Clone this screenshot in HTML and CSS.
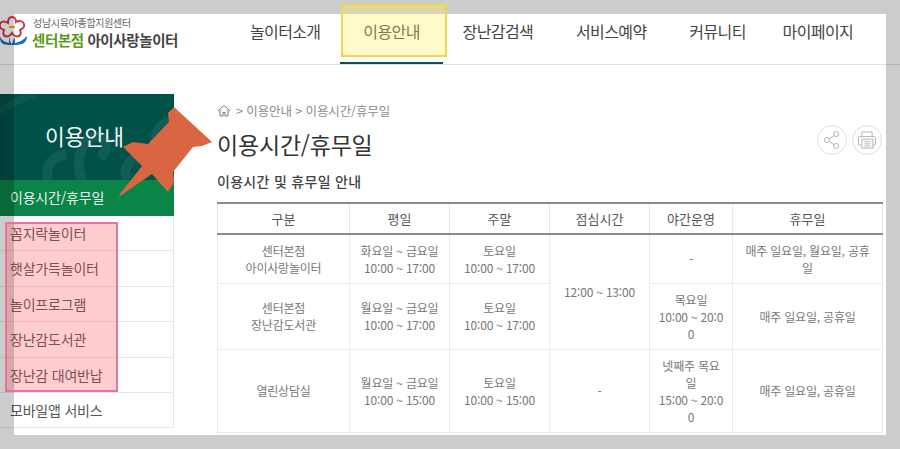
FILE: index.html
```html
<!DOCTYPE html>
<html lang="ko">

<head>
    <meta charset="UTF-8" />
    <title>이용시간/휴무일</title>
    <meta name="viewport" content="width=device-width, initial-scale=1.0" />
    <link rel="stylesheet" href="styles.css">
</head>

<body>

    <!-- header -->
    <header class="header">
        <div class="logo">
            <svg class="logo-mark" width="28" height="30" viewBox="0 0 28 30">
                <path d="M12 1c3 0 4 3 4 5 3-2 7-1 8 2s-2 5-4 6c1 2 1 5-1 6-2 1-5 0-7-3-2 3-5 4-7 3-2-1-2-4-1-6-3-1-5-3-4-6s5-3 8-1c0-3 1-6 4-6z" fill="#fff" stroke="#d8344e" stroke-width="2" />
                <rect x="9" y="10" width="6" height="2" fill="#e0b020" />
                <path d="M0 20c1 4 5 6 9 7V21c1 2 1 6 3 7 1-2 1-5 3-7v6c5-1 8-3 12-7 0 4-2 7-5 8-3 1-7 1-10 1-5 0-9 0-11-3-1-2-1-4-1-5z" fill="#1c6fb8" />
            </svg>
            <div class="logo-text">
                <div class="logo-sub">성남시육아종합지원센터</div>
                <div class="logo-name"><span class="logo-green">센터본점</span> 아이사랑놀이터</div>
            </div>
        </div>
        <nav class="gnb">
            <a href="#">놀이터소개</a>
            <a href="#" class="on">이용안내</a>
            <a href="#">장난감검색</a>
            <a href="#">서비스예약</a>
            <a href="#">커뮤니티</a>
            <a href="#" class="last">마이페이지</a>
        </nav>
    </header>

    <div class="wrap">
        <!-- side menu -->
        <aside class="side">
            <div class="side-title">
                <svg class="side-swirl" width="173" height="86" viewBox="0 0 173 86">
                    <path d="M48 86c-4-16 6-24 18-26M82 86c-8-20 0-44 16-44 10 0 10 14 2 22M128 86c-6-10 0-20 10-22M160 60c-8-14-6-28 12-34" fill="none" stroke="#0f5d56" stroke-width="10" />
                    <path d="M0 18C12 8 24 4 34 0" fill="none" stroke="#0a5950" stroke-width="8" />
                </svg>
                <span>이용안내</span>
            </div>
            <a href="#" class="side-item on">이용시간/휴무일</a>
            <a href="#" class="side-item">꼼지락놀이터</a>
            <a href="#" class="side-item">햇살가득놀이터</a>
            <a href="#" class="side-item">놀이프로그램</a>
            <a href="#" class="side-item">장난감도서관</a>
            <a href="#" class="side-item">장난감 대여반납</a>
            <a href="#" class="side-item">모바일앱 서비스</a>
        </aside>

        <!-- content -->
        <main class="content">
            <div class="path">
                <svg width="14" height="13" viewBox="0 0 14 13">
                    <path d="M1 7l6-5.500 6 5.500M3 6v6h3V8.500h2V12h3V6" fill="none" stroke="#777" stroke-width="1" />
                </svg>
                <span>&gt; 이용안내 &gt; 이용시간/휴무일</span>
            </div>
            <div class="title-row">
                <h1>이용시간/휴무일</h1>
                <div class="tools">
                    <span class="tool">
                        <svg width="20" height="22" viewBox="0 0 20 22">
                            <path d="M6 10l8-5M6 12.500l8 5" stroke="#aaa" fill="none" />
                            <circle cx="4" cy="11" r="3" fill="#fff" stroke="#aaa" />
                            <circle cx="15" cy="4" r="3" fill="#fff" stroke="#aaa" />
                            <circle cx="15" cy="18" r="3" fill="#fff" stroke="#aaa" />
                        </svg>
                    </span>
                    <span class="tool">
                        <svg width="22" height="22" viewBox="0 0 22 22">
                            <path d="M5 7V1.500h12V7M5 17H2.500A1.500 1.500 0 0 1 1 15.500V8.500A1.500 1.500 0 0 1 2.500 7h17A1.500 1.500 0 0 1 21 8.500v7a1.500 1.500 0 0 1-1.500 1.500H18" fill="none" stroke="#aaa" />
                            <rect x="5" y="10" width="13" height="10.500" fill="#fff" stroke="#aaa" />
                            <path d="M8 13h7M8 15.500h7M8 18h7" stroke="#aaa" />
                        </svg>
                    </span>
                </div>
            </div>
            <h2>이용시간 및 휴무일 안내</h2>
            <table class="time-table">
                <colgroup>
                    <col class="c1">
                    <col class="c2">
                    <col class="c2">
                    <col class="c2">
                    <col class="c3">
                    <col>
                </colgroup>
                <thead>
                    <tr>
                        <th>구분</th>
                        <th>평일</th>
                        <th>주말</th>
                        <th>점심시간</th>
                        <th>야간운영</th>
                        <th>휴무일</th>
                    </tr>
                </thead>
                <tbody>
                    <tr class="r1">
                        <td>센터본점<br>아이사랑놀이터</td>
                        <td>화요일 ~ 금요일<br>10:00 ~ 17:00</td>
                        <td>토요일<br>10:00 ~ 17:00</td>
                        <td rowspan="2">12:00 ~ 13:00</td>
                        <td>-</td>
                        <td>매주 일요일, 월요일, 공휴<br>일</td>
                    </tr>
                    <tr class="r2">
                        <td>센터본점<br>장난감도서관</td>
                        <td>월요일 ~ 금요일<br>10:00 ~ 17:00</td>
                        <td>토요일<br>10:00 ~ 17:00</td>
                        <td>목요일<br>10:00 ~ 20:0<br>0</td>
                        <td>매주 일요일, 공휴일</td>
                    </tr>
                    <tr class="r3">
                        <td>열린상담실</td>
                        <td>월요일 ~ 금요일<br>10:00 ~ 15:00</td>
                        <td>토요일<br>10:00 ~ 15:00</td>
                        <td>-</td>
                        <td>넷째주 목요<br>일<br>15:00 ~ 20:0<br>0</td>
                        <td>매주 일요일, 공휴일</td>
                    </tr>
                </tbody>
            </table>
        </main>
    </div>

    <!-- annotations drawn on top of the capture -->
    <div class="note-frame"></div>
    <div class="note-yellow"></div>
    <div class="note-pink"></div>
    <svg class="note-pin" width="100" height="95" viewBox="0 0 100 95">
        <path d="M56 2 L50 8 L51 17 L30 39 L15 37 L5 42 L24 61 L1 90 L2 91 L34 69 L50 87 L56 77 L55 67 L75 42 L84 41 L94 37 Z" fill="#d96542" />
    </svg>

</body>

</html>
```

FILE: styles.css
```css
* {
    box-sizing: border-box;
}

body {
    margin: 0;
    position: relative;
    height: 449px;
    overflow: hidden;
    background: #fff;
    color: #555;
    font-family: "Noto Sans CJK KR", "Noto Sans", sans-serif;
    font-size: 12px;
}

a {
    color: inherit;
    text-decoration: none;
}

.header {
    display: flex;
    height: 65px;
    border-bottom: 1px solid #e2e2e2;
}

.logo {
    display: flex;
    width: 228.500px;
    padding-top: 16px;
}

.logo-mark {
    flex: none;
    margin-right: 4px;
}

.logo-text {
    margin-top: 0;
}

.logo-sub {
    height: 13px;
    margin-left: 1px;
    font-size: 10px;
    line-height: 13px;
    letter-spacing: -0.3px;
    color: #666;
}

.logo-name {
    margin-top: 2px;
    height: 17px;
    font-size: 14.500px;
    line-height: 17px;
    font-weight: 700;
    letter-spacing: -0.4px;
    color: #444;
    white-space: nowrap;
}

.logo-green {
    color: #5a9a20;
}

.gnb {
    display: flex;
}

.gnb a {
    position: relative;
    padding: 19px 21.400px 0;
    font-size: 16px;
    line-height: 24px;
    letter-spacing: -0.6px;
    color: #444;
    white-space: nowrap;
}

.gnb a.last {
    margin-left: -6px;
}

.gnb a.on::after {
    content: '';
    position: absolute;
    left: -2px;
    right: -2px;
    bottom: 0;
    height: 2px;
    background: #0d4f4f;
}

.wrap {
    display: flex;
    padding-top: 29px;
}

.side {
    width: 174px;
    flex: none;
}

.side-title {
    position: relative;
    height: 86px;
    padding: 27px 5px 0 0;
    background: #00514a;
    color: #f2f7f5;
    font-size: 21.500px;
    line-height: 30px;
    text-align: center;
    overflow: hidden;
}

.side-title span {
    position: relative;
}

.side-swirl {
    position: absolute;
    left: 0;
    top: 0;
}

.side-item {
    display: block;
    height: 35.400px;
    padding: 7px 0 0 10px;
    border-right: 1px solid #e6e6e6;
    border-bottom: 1px solid #e6e6e6;
    font-size: 14px;
    line-height: 20px;
    letter-spacing: -0.2px;
    color: #555;
}

.side-item.on {
    height: 36px;
    padding-top: 7px;
    background: #0a8447;
    border: none;
    color: #e6f2ea;
}

.content {
    flex: 1;
    margin-left: 43px;
    margin-right: 17px;
    padding-top: 6px;
}

.path {
    display: flex;
    align-items: center;
    gap: 5px;
    height: 20px;
    color: #8c8c8c;
    font-size: 12.500px;
    letter-spacing: -0.1px;
}

.title-row {
    display: flex;
    justify-content: space-between;
    height: 34px;
    margin-top: 7px;
}

h1 {
    margin: 0;
    font-size: 23px;
    line-height: 34px;
    font-weight: 400;
    letter-spacing: -0.2px;
    color: #333;
}

.tools {
    display: flex;
    gap: 5px;
    margin: -2px 1px 0 0;
}

.tool {
    display: flex;
    align-items: center;
    justify-content: center;
    width: 30px;
    height: 30px;
    border: 1px solid #ddd;
    border-radius: 50%;
}

.tool svg {
    transform: scale(.85);
}

h2 {
    margin: 10px 0 0;
    font-size: 14px;
    line-height: 20px;
    font-weight: 500;
    letter-spacing: 0.3px;
    color: #444;
}

.time-table {
    width: 100%;
    margin-top: 11px;
    table-layout: fixed;
    border-collapse: collapse;
    border: 1px solid #e8e8e8;
    border-top: 2px solid #8b8b8b;
    text-align: center;
}

.c1 {
    width: 132px;
}

.c2 {
    width: 100px;
}

.c3 {
    width: 83px;
}

th {
    height: 31px;
    padding: 0;
    border: 1px solid #e8e8e8;
    border-top: 0;
    border-bottom: 2px solid #8b8b8b;
    font-size: 13px;
    font-weight: 400;
    color: #555;
}

td {
    padding: 0;
    border: 1px solid #ebebeb;
    font-size: 12px;
    line-height: 17px;
    letter-spacing: -0.2px;
    color: #777;
    white-space: nowrap;
}

.r1 {
    height: 49px;
}

.r2 {
    height: 66px;
}

.r3 {
    height: 83px;
}

/* annotations */
.note-frame {
    position: absolute;
    inset: 0;
    border: 14px solid rgba(0, 0, 0, .2);
}

.note-yellow {
    position: absolute;
    left: 341px;
    top: 4px;
    width: 106px;
    height: 53px;
    background: rgba(255, 240, 90, .32);
    border: 2px solid #ecd750;
}

.note-pink {
    position: absolute;
    left: 5px;
    top: 222px;
    width: 113px;
    height: 170px;
    background: rgba(250, 60, 70, .26);
    border: 2px solid #e672a4;
}

.note-pin {
    position: absolute;
    left: 118px;
    top: 105px;
}
```
